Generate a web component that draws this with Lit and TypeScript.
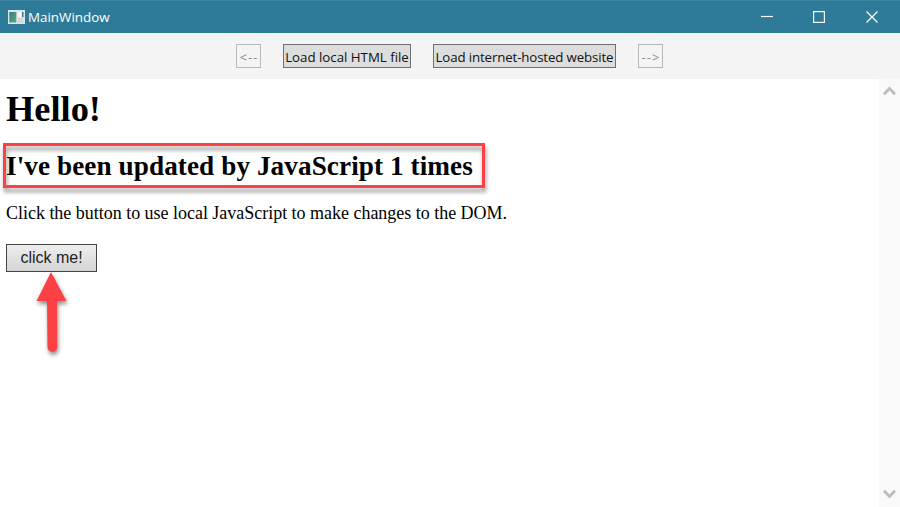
import { LitElement, html, css } from "lit";
import { customElement, state } from "lit/decorators.js";

@customElement("app-root")
export class AppRoot extends LitElement {
  @state() private count = 1;

  static styles = css`
    :host { display: flex; flex-direction: column; width: 900px; height: 507px; overflow: hidden; background: #fff; }
    * { box-sizing: border-box; }
    svg { display: block; flex: none; }
    .titlebar { flex: none; display: flex; align-items: center; height: 33px; padding-left: 8px; background: #2d7b99; border-top: 1px solid #3f87a3; color: #fff; font: 13.4px "Open Sans", "Noto Sans", sans-serif; }
    .title { margin-left: 3px; flex: 1; line-height: 32px; white-space: nowrap; }
    .controls { display: flex; gap: 40px; padding-right: 22px; margin-top: -1px; }
    .close { margin-left: 1px; }
    .toolbar { flex: none; height: 46px; display: flex; align-items: flex-start; padding: 11px 0 0 236px; background: #f4f4f4; font: 13px "Open Sans", "Noto Sans", sans-serif; }
    .tool { flex: none; display: flex; align-items: center; justify-content: center; height: 24px; padding: 1px 0 0; margin: 0; border: 1px solid #707070; background: #ddd; color: #111; font: inherit; white-space: nowrap; }
    .nav { width: 25px; border-color: #b4b9bb; background: #f4f4f4; color: #8b8b8b; letter-spacing: 1px; padding-left: 1px; }
    .local { width: 128px; margin-left: 22px; font-size: 13.3px; letter-spacing: -0.02px; }
    .hosted { width: 183px; margin: 0 22px; font-size: 13.3px; letter-spacing: -0.14px; }
    .view { flex: 1; display: flex; min-height: 0; }
    .page { flex: 1; padding: 9px 0 0 6px; color: #000; font: 18px/21px "Liberation Serif", serif; }
    h1, h2, p { margin: 0; white-space: nowrap; }
    h1 { font-size: 36.4px; line-height: 42px; }
    .notice { position: relative; margin-top: 21px; height: 31px; }
    h2 { font-size: 27.2px; line-height: 31px; letter-spacing: 0.08px; }
    .mark { position: absolute; left: -3px; top: -8px; width: 482px; height: 45px; border: 3px solid #fc4144; filter: drop-shadow(1px 4px 2px rgba(0, 0, 0, .42)); }
    p { margin-top: 21px; letter-spacing: -0.02px; }
    .action { position: relative; width: 91px; margin-top: 20px; }
    .click { display: block; width: 91px; height: 28px; padding: 0; border: 1px solid #444; border-radius: 0; background: linear-gradient(#eee, #d5d5d5); color: #222; font: 16px "Liberation Sans", sans-serif; }
    .arrow { position: absolute; left: 26px; top: 27px; overflow: visible; filter: drop-shadow(1px 3px 2px rgba(0, 0, 0, .45)); }
    .scroll { width: 21px; display: flex; flex-direction: column; justify-content: space-between; background: #f9f9f9; padding: 7px 0 8px 4px; }
  `;

  render() {
    return html`
      <header class="titlebar">
        <svg width="17" height="14" viewBox="0 0 17 14">
          <defs><linearGradient id="g" x1="0" y1="0" x2="1" y2="1"><stop stop-color="#367c91" /><stop offset="1" stop-color="#5ca879" /></linearGradient></defs>
          <rect width="17" height="14" fill="#dce4e6" />
          <rect x="1.3" y="2" width="7" height="10.5" fill="url(#g)" />
          <rect x="10" y="2" width="3" height="5" fill="#f8f8f8" />
          <rect x="14" y="2" width="1.5" height="5" fill="#3b7f96" />
          <path d="M10 9h5M10 11.5h5" stroke="#c6ced1" fill="none" />
        </svg>
        <span class="title">MainWindow</span>
        <div class="controls">
          <svg width="12" height="12" viewBox="0 0 12 12"><path d="M0 5.5h12" stroke="#fff" stroke-width="1.2" /></svg>
          <svg width="12" height="12" viewBox="0 0 12 12"><rect x=".6" y=".6" width="10.8" height="10.8" fill="none" stroke="#fff" stroke-width="1.2" /></svg>
          <svg class="close" width="12" height="12" viewBox="0 0 12 12"><path d="M.5.5l11 11M11.5.5l-11 11" stroke="#fff" stroke-width="1.2" /></svg>
        </div>
      </header>
      <nav class="toolbar">
        <button class="tool nav">&lt;--</button>
        <button class="tool local">Load local HTML file</button>
        <button class="tool hosted">Load internet-hosted website</button>
        <button class="tool nav">--&gt;</button>
      </nav>
      <div class="view">
        <main class="page">
          <h1>Hello!</h1>
          <div class="notice"><h2>I've been updated by JavaScript ${this.count} times</h2><div class="mark"></div></div>
          <p>Click the button to use local JavaScript to make changes to the DOM.</p>
          <div class="action">
            <button class="click" @click=${() => this.count++}>click me!</button>
            <svg class="arrow" width="40" height="84" viewBox="0 0 40 84"><path d="M19 1L34.5 30H25l.3 46a4.8 4.8 0 0 1-9.8 0L15 30H4.5Z" fill="#fc4144" /></svg>
          </div>
        </main>
        <div class="scroll">
          <svg width="13" height="10" viewBox="0 0 13 10"><path d="M1 8.2L6.5 2.5L12 8.2" fill="none" stroke="#bcbcbc" stroke-width="2.8" /></svg>
          <svg width="13" height="10" viewBox="0 0 13 10"><path d="M1 1.8L6.5 7.5L12 1.8" fill="none" stroke="#bcbcbc" stroke-width="2.8" /></svg>
        </div>
      </div>
    `;
  }
}
